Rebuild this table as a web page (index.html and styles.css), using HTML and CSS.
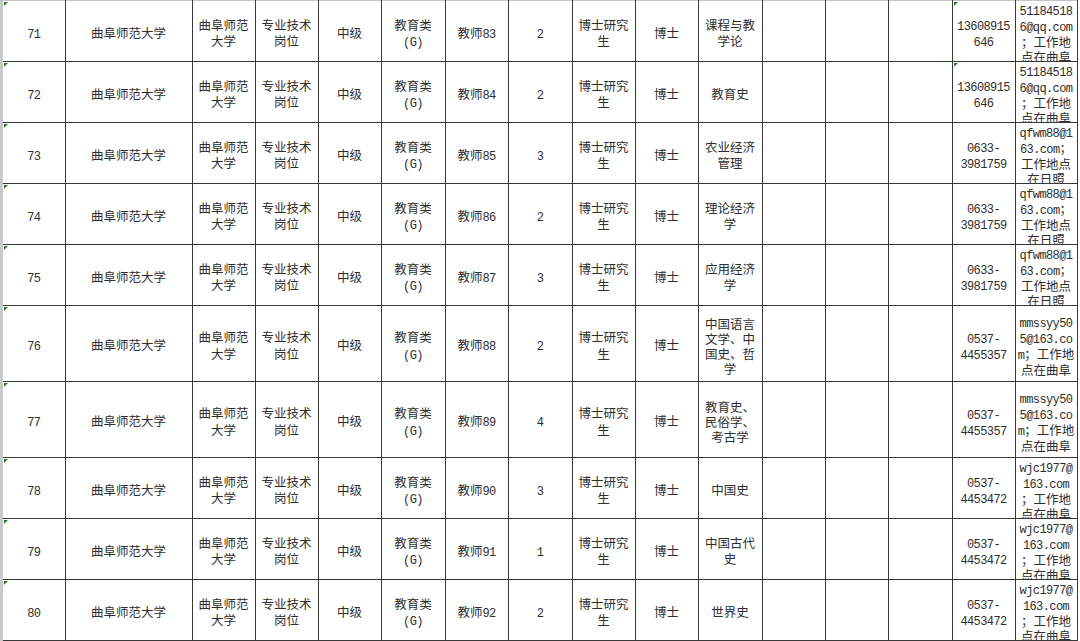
FILE: index.html
```html
<!DOCTYPE html>
<html lang="zh-CN">
<head>
<meta charset="utf-8">
<title>招聘岗位表</title>
<link rel="stylesheet" href="styles.css">
</head>
<body>
<div class="sheet">
<table class="grid">
<colgroup>
<col class="w62"><col class="w127"><col class="w63"><col class="w63"><col class="w63"><col class="w64"><col class="w63"><col class="w64"><col class="w63"><col class="w63"><col class="w64"><col class="w63"><col class="w63"><col class="w64"><col class="w63"><col class="w62">
</colgroup>
<tbody>
<tr class="r">
<td class="no tri"><span class="m">71</span></td><td>曲阜师范大学</td><td>曲阜师范<br>大学</td><td>专业技术<br>岗位</td><td>中级</td><td>教育类<br><span class="m">(G)</span></td><td>教师<span class="m">83</span></td><td><span class="m">2</span></td><td>博士研究<br>生</td><td>博士</td><td>课程与教<br>学论</td><td></td><td></td><td></td><td class="ph tri"><span class="m">13608915<br>646</span></td><td class="em"><div class="box"><div class="txt"><span class="m">51184518<br>6@qq.com</span><br>；工作地<br>点在曲阜</div></div></td>
</tr>
<tr class="r">
<td class="no tri"><span class="m">72</span></td><td>曲阜师范大学</td><td>曲阜师范<br>大学</td><td>专业技术<br>岗位</td><td>中级</td><td>教育类<br><span class="m">(G)</span></td><td>教师<span class="m">84</span></td><td><span class="m">2</span></td><td>博士研究<br>生</td><td>博士</td><td>教育史</td><td></td><td></td><td></td><td class="ph tri"><span class="m">13608915<br>646</span></td><td class="em"><div class="box"><div class="txt"><span class="m">51184518<br>6@qq.com</span><br>；工作地<br>点在曲阜</div></div></td>
</tr>
<tr class="r">
<td class="no tri"><span class="m">73</span></td><td>曲阜师范大学</td><td>曲阜师范<br>大学</td><td>专业技术<br>岗位</td><td>中级</td><td>教育类<br><span class="m">(G)</span></td><td>教师<span class="m">85</span></td><td><span class="m">3</span></td><td>博士研究<br>生</td><td>博士</td><td>农业经济<br>管理</td><td></td><td></td><td></td><td class="ph"><span class="m">0633-<br>3981759</span></td><td class="em"><div class="box"><div class="txt"><span class="m">qfwm88@1<br>63.com</span>；<br>工作地点<br>在日照</div></div></td>
</tr>
<tr class="r">
<td class="no tri"><span class="m">74</span></td><td>曲阜师范大学</td><td>曲阜师范<br>大学</td><td>专业技术<br>岗位</td><td>中级</td><td>教育类<br><span class="m">(G)</span></td><td>教师<span class="m">86</span></td><td><span class="m">2</span></td><td>博士研究<br>生</td><td>博士</td><td>理论经济<br>学</td><td></td><td></td><td></td><td class="ph"><span class="m">0633-<br>3981759</span></td><td class="em"><div class="box"><div class="txt"><span class="m">qfwm88@1<br>63.com</span>；<br>工作地点<br>在日照</div></div></td>
</tr>
<tr class="s">
<td class="no tri"><span class="m">75</span></td><td>曲阜师范大学</td><td>曲阜师范<br>大学</td><td>专业技术<br>岗位</td><td>中级</td><td>教育类<br><span class="m">(G)</span></td><td>教师<span class="m">87</span></td><td><span class="m">3</span></td><td>博士研究<br>生</td><td>博士</td><td>应用经济<br>学</td><td></td><td></td><td></td><td class="ph"><span class="m">0633-<br>3981759</span></td><td class="em"><div class="box"><div class="txt"><span class="m">qfwm88@1<br>63.com</span>；<br>工作地点<br>在日照</div></div></td>
</tr>
<tr class="t">
<td class="no tri"><span class="m">76</span></td><td>曲阜师范大学</td><td>曲阜师范<br>大学</td><td>专业技术<br>岗位</td><td>中级</td><td>教育类<br><span class="m">(G)</span></td><td>教师<span class="m">88</span></td><td><span class="m">2</span></td><td>博士研究<br>生</td><td>博士</td><td class="tight">中国语言<br>文学、中<br>国史、哲<br>学</td><td></td><td></td><td></td><td class="ph"><span class="m">0537-<br>4455357</span></td><td class="em"><div class="box"><div class="txt"><span class="m">mmssyy50<br>5@163.co<br>m</span>；工作地<br>点在曲阜</div></div></td>
</tr>
<tr class="t">
<td class="no tri"><span class="m">77</span></td><td>曲阜师范大学</td><td>曲阜师范<br>大学</td><td>专业技术<br>岗位</td><td>中级</td><td>教育类<br><span class="m">(G)</span></td><td>教师<span class="m">89</span></td><td><span class="m">4</span></td><td>博士研究<br>生</td><td>博士</td><td class="tight">教育史、<br>民俗学、<br>考古学</td><td></td><td></td><td></td><td class="ph"><span class="m">0537-<br>4455357</span></td><td class="em"><div class="box"><div class="txt"><span class="m">mmssyy50<br>5@163.co<br>m</span>；工作地<br>点在曲阜</div></div></td>
</tr>
<tr class="r">
<td class="no tri"><span class="m">78</span></td><td>曲阜师范大学</td><td>曲阜师范<br>大学</td><td>专业技术<br>岗位</td><td>中级</td><td>教育类<br><span class="m">(G)</span></td><td>教师<span class="m">90</span></td><td><span class="m">3</span></td><td>博士研究<br>生</td><td>博士</td><td>中国史</td><td></td><td></td><td></td><td class="ph"><span class="m">0537-<br>4453472</span></td><td class="em"><div class="box"><div class="txt"><span class="m">wjc1977@<br>163.com</span><br>；工作地<br>点在曲阜</div></div></td>
</tr>
<tr class="r">
<td class="no tri"><span class="m">79</span></td><td>曲阜师范大学</td><td>曲阜师范<br>大学</td><td>专业技术<br>岗位</td><td>中级</td><td>教育类<br><span class="m">(G)</span></td><td>教师<span class="m">91</span></td><td><span class="m">1</span></td><td>博士研究<br>生</td><td>博士</td><td>中国古代<br>史</td><td></td><td></td><td></td><td class="ph"><span class="m">0537-<br>4453472</span></td><td class="em"><div class="box"><div class="txt"><span class="m">wjc1977@<br>163.com</span><br>；工作地<br>点在曲阜</div></div></td>
</tr>
<tr class="s">
<td class="no tri"><span class="m">80</span></td><td>曲阜师范大学</td><td>曲阜师范<br>大学</td><td>专业技术<br>岗位</td><td>中级</td><td>教育类<br><span class="m">(G)</span></td><td>教师<span class="m">92</span></td><td><span class="m">2</span></td><td>博士研究<br>生</td><td>博士</td><td>世界史</td><td></td><td></td><td></td><td class="ph"><span class="m">0537-<br>4453472</span></td><td class="em"><div class="box"><div class="txt"><span class="m">wjc1977@<br>163.com</span><br>；工作地<br>点在曲阜</div></div></td>
</tr>
</tbody>
</table>
</div>
</body>
</html>
```

FILE: styles.css
```css
html, body {
  margin: 0;
  padding: 0;
  background: #ffffff;
}

body {
  width: 1080px;
  height: 641px;
  overflow: hidden;
}

.sheet {
  height: 641px;
  box-sizing: border-box;
  border-left: 3px solid #c9c9c9;
}

.grid {
  border-collapse: collapse;
  table-layout: fixed;
  width: 1074px;
  font-family: "Noto Sans CJK SC", "Liberation Sans", sans-serif;
  font-size: 12.5px;
  color: #2e2e2e;
}

.w62 { width: 62px; }
.w63 { width: 63px; }
.w64 { width: 64px; }
.w127 { width: 127px; }

.grid td {
  border: 1px solid #383838;
  padding: 4px 0 0;
  text-align: center;
  vertical-align: middle;
  line-height: 16.5px;
  white-space: nowrap;
  overflow: hidden;
  position: relative;
}

.grid tr:first-child td {
  border-top-color: #c4c4c4;
}

.grid td.no {
  border-left: none;
}

.r { height: 61px; }
.s { height: 60px; }
.t { height: 76px; }

.m {
  font-family: "Liberation Mono", "DejaVu Sans Mono", monospace;
  font-size: 12px;
  line-height: 1;
  letter-spacing: -0.6px;
}

.grid td.tight,
.grid td.ph {
  line-height: 15px;
}

.grid td.em {
  padding: 0;
  line-height: 15px;
}

.box {
  display: flex;
  flex-direction: column;
  justify-content: center;
  align-items: center;
  height: 60px;
  padding-top: 4px;
  box-sizing: border-box;
  overflow: hidden;
}

.txt {
  flex: none;
  text-align: center;
}

.t .box {
  height: 75px;
}

.tri::before {
  content: "";
  position: absolute;
  top: 1px;
  left: 1px;
  border-top: 4px solid #2f7a2f;
  border-right: 4px solid transparent;
}
```
